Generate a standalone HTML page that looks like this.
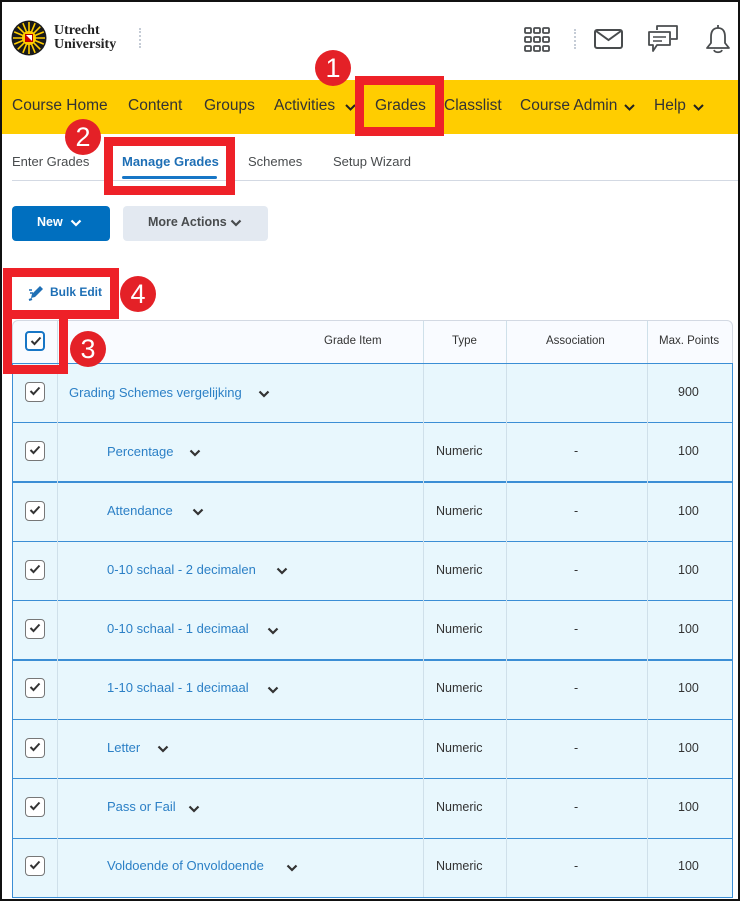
<!DOCTYPE html>
<html><head><meta charset="utf-8">
<style>
*{box-sizing:border-box;margin:0;padding:0;white-space:nowrap}
body{width:740px;height:901px;background:#fff;font-family:"Liberation Sans",sans-serif;position:relative;overflow:hidden}
.frame{position:absolute;left:0;top:0;width:740px;height:901px;border:2px solid #111;z-index:50;pointer-events:none}
.abs{position:absolute}
.nav{position:absolute;top:80px;left:0;width:740px;height:54px;background:#ffcd00}
.nav span{position:absolute;top:17px;font-size:15.5px;color:#333}
.tab{position:absolute;top:154px;font-size:13px;color:#494c4e}
.red{position:absolute;border:9px solid #ee2128;z-index:20}
.circ{position:absolute;width:36px;height:36px;border-radius:50%;background:#e42127;color:#fff;font-size:27px;text-align:center;line-height:36px;z-index:21}
.row{position:absolute;left:12px;width:721px;background:#e8f7fd;border:1px solid #3b8ed5;border-top:none}
.cb{position:absolute;width:20px;height:20px;border:1px solid #777;border-radius:4px;background:#fff}
.cb svg{position:absolute;left:3px;top:3px}
.cell{position:absolute;font-size:12.5px;color:#333}
.link{position:absolute;font-size:13px;color:#2c80c6}
.vl{position:absolute;width:1px;background:#cfe0ea}
.chev{position:absolute}
</style></head><body>
<div class="frame"></div>

<svg class="abs" style="left:11px;top:20px" width="36" height="36" viewBox="0 0 36 36">
<circle cx="18" cy="18" r="17.5" fill="#1a1a1a"/>
<g stroke="#ffcd00" stroke-width="1.6">
<line x1="18" y1="2" x2="18" y2="34"/><line x1="2" y1="18" x2="34" y2="18"/>
<line x1="6.7" y1="6.7" x2="29.3" y2="29.3"/><line x1="29.3" y1="6.7" x2="6.7" y2="29.3"/>
<line x1="11.9" y1="3.2" x2="24.1" y2="32.8"/><line x1="24.1" y1="3.2" x2="11.9" y2="32.8"/>
<line x1="3.2" y1="11.9" x2="32.8" y2="24.1"/><line x1="3.2" y1="24.1" x2="32.8" y2="11.9"/>
</g>
<circle cx="18" cy="18" r="7" fill="#ffcd00"/>
<rect x="14.5" y="14.5" width="7" height="7" fill="#fff" stroke="#a00" stroke-width="1"/>
<path d="M14.5 14.5 L21.5 21.5 L14.5 21.5Z" fill="#c00"/>
</svg>
<div class="abs" style="left:54px;top:24px;font-family:'Liberation Serif',serif;font-weight:bold;font-size:14px;line-height:14px;color:#222">Utrecht<br>University</div>
<div class="abs" style="left:139px;top:28px;height:20px;border-left:2px dotted #c5ccd6"></div>

<svg class="abs" style="left:524px;top:27px" width="26" height="25" viewBox="0 0 26 25" fill="none" stroke="#494c4e" stroke-width="1.8">
<rect x="1" y="1" width="6" height="5" rx="1"/><rect x="10" y="1" width="6" height="5" rx="1"/><rect x="19" y="1" width="6" height="5" rx="1"/>
<rect x="1" y="10" width="6" height="5" rx="1"/><rect x="10" y="10" width="6" height="5" rx="1"/><rect x="19" y="10" width="6" height="5" rx="1"/>
<rect x="1" y="19" width="6" height="5" rx="1"/><rect x="10" y="19" width="6" height="5" rx="1"/><rect x="19" y="19" width="6" height="5" rx="1"/>
</svg>
<div class="abs" style="left:574px;top:29px;height:20px;border-left:2px dotted #c5ccd6"></div>
<svg class="abs" style="left:594px;top:29px" width="29" height="20" viewBox="0 0 29 20" fill="none" stroke="#494c4e" stroke-width="2">
<rect x="1" y="1" width="27" height="18" rx="2"/><path d="M2 2 L14.5 11 L27 2"/>
</svg>
<svg class="abs" style="left:647px;top:24px" width="32" height="30" viewBox="0 0 32 30" fill="none" stroke="#494c4e" stroke-width="1.8" stroke-linejoin="round">
<path d="M10 6 V2 H30 V15 H24"/>
<path d="M2 8 H23 V21 H10 L6 27 V21 H2 Z"/>
<path d="M6 13 H19 M6 17 H15" stroke-width="1.4"/>
</svg>
<svg class="abs" style="left:704px;top:24px" width="28" height="30" viewBox="0 0 28 30" fill="none" stroke="#494c4e" stroke-width="1.8" stroke-linejoin="round">
<path d="M14 1 V4"/><path d="M14 4 C8 4 7 9 7 13 V19 L3 24 H25 L21 19 V13 C21 9 20 4 14 4Z"/>
<path d="M10 26 C11 29 17 29 18 26"/>
</svg>

<div class="nav">
<span style="left:12px">Course Home</span>
<span style="left:128px">Content</span>
<span style="left:204px">Groups</span>
<span style="left:274px">Activities</span>
<span style="left:375px">Grades</span>
<span style="left:444px">Classlist</span>
<span style="left:520px">Course Admin</span>
<span style="left:654px">Help</span>
</div>
<svg class="chev" style="left:345px;top:104px" width="11" height="7" viewBox="0 0 11 7"><path d="M1 1 L5.5 5.5 L10 1" fill="none" stroke="#222" stroke-width="2"/></svg>
<svg class="chev" style="left:624px;top:104px" width="11" height="7" viewBox="0 0 11 7"><path d="M1 1 L5.5 5.5 L10 1" fill="none" stroke="#222" stroke-width="2"/></svg>
<svg class="chev" style="left:693px;top:104px" width="11" height="7" viewBox="0 0 11 7"><path d="M1 1 L5.5 5.5 L10 1" fill="none" stroke="#222" stroke-width="2"/></svg>

<div class="tab" style="left:12px">Enter Grades</div>
<div class="tab" style="left:122px;color:#1e6fb5;font-weight:bold">Manage Grades</div>
<div class="abs" style="left:122px;top:176px;width:95px;height:3px;background:#1776c6;border-radius:2px"></div>
<div class="tab" style="left:248px">Schemes</div>
<div class="tab" style="left:333px">Setup Wizard</div>
<div class="abs" style="left:12px;top:180px;width:726px;height:1px;background:#d3d9e3"></div>

<div class="abs" style="left:12px;top:206px;width:98px;height:35px;background:#006fbf;border-radius:4px"></div>
<div class="abs" style="left:37px;top:215px;font-size:12.5px;font-weight:bold;color:#fff">New</div>
<svg class="chev" style="left:70px;top:219px" width="12" height="8" viewBox="0 0 12 8"><path d="M1.5 1.5 L6 6 L10.5 1.5" fill="none" stroke="#fff" stroke-width="2.2"/></svg>
<div class="abs" style="left:123px;top:206px;width:145px;height:35px;background:#e3e9f1;border-radius:4px"></div>
<div class="abs" style="left:148px;top:215px;font-size:12.5px;font-weight:bold;color:#494c4e">More Actions</div>
<svg class="chev" style="left:230px;top:219px" width="12" height="8" viewBox="0 0 12 8"><path d="M1.5 1.5 L6 6 L10.5 1.5" fill="none" stroke="#494c4e" stroke-width="2.2"/></svg>

<svg class="abs" style="left:28px;top:284px;z-index:22" width="18" height="17" viewBox="0 0 18 17"><path d="M3 14 L4 10 L12 2 L15 5 L7 13 Z" fill="#1e6fb5"/><path d="M1 16 L4 15" stroke="#1e6fb5" stroke-width="2"/><path d="M1 6 L4 6 M2 9 L5 9" stroke="#1e6fb5" stroke-width="1.5"/></svg>
<div class="abs" style="left:50px;top:285px;font-size:12px;font-weight:bold;color:#1e6fb5;z-index:22">Bulk Edit</div>

<div class="abs" style="left:12px;top:320px;width:721px;height:44px;background:#f9fbff;border:1px solid #d3d9e3;border-radius:6px 6px 0 0"></div>
<div class="vl" style="left:57px;top:321px;height:576px"></div>
<div class="vl" style="left:423px;top:321px;height:576px"></div>
<div class="vl" style="left:506px;top:321px;height:576px"></div>
<div class="vl" style="left:647px;top:321px;height:576px"></div>
<div class="cell" style="left:324px;top:335px;font-size:11.5px">Grade Item</div>
<div class="cell" style="left:452px;top:335px;font-size:11.5px">Type</div>
<div class="cell" style="left:546px;top:335px;font-size:11.5px">Association</div>
<div class="cell" style="left:659px;top:335px;font-size:11.5px">Max. Points</div>
<div class="cb" style="left:25px;top:331px;border:2px solid #1776c6;z-index:22"><svg width="12" height="10" viewBox="0 0 12 10"><path d="M1.5 5 L4.5 8 L10.5 1.5" fill="none" stroke="#333" stroke-width="2"/></svg></div>

<div class="row" style="top:363px;height:60px;border-top:1px solid #3b8ed5"></div>
<div class="row" style="top:422px;height:60px;border-top:1px solid #3b8ed5"></div>
<div class="row" style="top:482px;height:60px;border-top:1px solid #3b8ed5"></div>
<div class="row" style="top:541px;height:60px;border-top:1px solid #3b8ed5"></div>
<div class="row" style="top:600px;height:60px;border-top:1px solid #3b8ed5"></div>
<div class="row" style="top:660px;height:60px;border-top:1px solid #3b8ed5"></div>
<div class="row" style="top:719px;height:60px;border-top:1px solid #3b8ed5"></div>
<div class="row" style="top:778px;height:61px;border-top:1px solid #3b8ed5"></div>
<div class="row" style="top:838px;height:60px;border-top:1px solid #3b8ed5"></div>
<div class="vl" style="left:57px;top:364px;height:533px;z-index:3"></div>
<div class="vl" style="left:423px;top:364px;height:533px;z-index:3"></div>
<div class="vl" style="left:506px;top:364px;height:533px;z-index:3"></div>
<div class="vl" style="left:647px;top:364px;height:533px;z-index:3"></div>

<div style="position:absolute;left:0;top:0;width:740px;height:901px;z-index:4">
<div class="cb" style="left:25px;top:382px"><svg width="12" height="10" viewBox="0 0 12 10"><path d="M1.5 5 L4.5 8 L10.5 1.5" fill="none" stroke="#333" stroke-width="2"/></svg></div>
<div class="link" style="left:69px;top:385px">Grading Schemes vergelijking</div>
<svg class="chev" style="left:258px;top:390px" width="12" height="8" viewBox="0 0 12 8"><path d="M1.5 1.5 L6 6 L10.5 1.5" fill="none" stroke="#333" stroke-width="2.2"/></svg>
<div class="cell" style="left:678px;top:385px">900</div>

<div class="cb" style="left:25px;top:441px"><svg width="12" height="10" viewBox="0 0 12 10"><path d="M1.5 5 L4.5 8 L10.5 1.5" fill="none" stroke="#333" stroke-width="2"/></svg></div>
<div class="link" style="left:107px;top:444px">Percentage</div>
<svg class="chev" style="left:189px;top:449px" width="12" height="8" viewBox="0 0 12 8"><path d="M1.5 1.5 L6 6 L10.5 1.5" fill="none" stroke="#333" stroke-width="2.2"/></svg>
<div class="cell" style="left:436px;top:444px">Numeric</div><div class="cell" style="left:574px;top:444px">-</div><div class="cell" style="left:678px;top:444px">100</div>

<div class="cb" style="left:25px;top:501px"><svg width="12" height="10" viewBox="0 0 12 10"><path d="M1.5 5 L4.5 8 L10.5 1.5" fill="none" stroke="#333" stroke-width="2"/></svg></div>
<div class="link" style="left:107px;top:503px">Attendance</div>
<svg class="chev" style="left:192px;top:508px" width="12" height="8" viewBox="0 0 12 8"><path d="M1.5 1.5 L6 6 L10.5 1.5" fill="none" stroke="#333" stroke-width="2.2"/></svg>
<div class="cell" style="left:436px;top:504px">Numeric</div><div class="cell" style="left:574px;top:504px">-</div><div class="cell" style="left:678px;top:504px">100</div>

<div class="cb" style="left:25px;top:560px"><svg width="12" height="10" viewBox="0 0 12 10"><path d="M1.5 5 L4.5 8 L10.5 1.5" fill="none" stroke="#333" stroke-width="2"/></svg></div>
<div class="link" style="left:107px;top:562px">0-10 schaal - 2 decimalen</div>
<svg class="chev" style="left:276px;top:567px" width="12" height="8" viewBox="0 0 12 8"><path d="M1.5 1.5 L6 6 L10.5 1.5" fill="none" stroke="#333" stroke-width="2.2"/></svg>
<div class="cell" style="left:436px;top:563px">Numeric</div><div class="cell" style="left:574px;top:563px">-</div><div class="cell" style="left:678px;top:563px">100</div>

<div class="cb" style="left:25px;top:619px"><svg width="12" height="10" viewBox="0 0 12 10"><path d="M1.5 5 L4.5 8 L10.5 1.5" fill="none" stroke="#333" stroke-width="2"/></svg></div>
<div class="link" style="left:107px;top:621px">0-10 schaal - 1 decimaal</div>
<svg class="chev" style="left:267px;top:627px" width="12" height="8" viewBox="0 0 12 8"><path d="M1.5 1.5 L6 6 L10.5 1.5" fill="none" stroke="#333" stroke-width="2.2"/></svg>
<div class="cell" style="left:436px;top:622px">Numeric</div><div class="cell" style="left:574px;top:622px">-</div><div class="cell" style="left:678px;top:622px">100</div>

<div class="cb" style="left:25px;top:678px"><svg width="12" height="10" viewBox="0 0 12 10"><path d="M1.5 5 L4.5 8 L10.5 1.5" fill="none" stroke="#333" stroke-width="2"/></svg></div>
<div class="link" style="left:107px;top:680px">1-10 schaal - 1 decimaal</div>
<svg class="chev" style="left:267px;top:686px" width="12" height="8" viewBox="0 0 12 8"><path d="M1.5 1.5 L6 6 L10.5 1.5" fill="none" stroke="#333" stroke-width="2.2"/></svg>
<div class="cell" style="left:436px;top:681px">Numeric</div><div class="cell" style="left:574px;top:681px">-</div><div class="cell" style="left:678px;top:681px">100</div>

<div class="cb" style="left:25px;top:738px"><svg width="12" height="10" viewBox="0 0 12 10"><path d="M1.5 5 L4.5 8 L10.5 1.5" fill="none" stroke="#333" stroke-width="2"/></svg></div>
<div class="link" style="left:107px;top:740px">Letter</div>
<svg class="chev" style="left:157px;top:745px" width="12" height="8" viewBox="0 0 12 8"><path d="M1.5 1.5 L6 6 L10.5 1.5" fill="none" stroke="#333" stroke-width="2.2"/></svg>
<div class="cell" style="left:436px;top:741px">Numeric</div><div class="cell" style="left:574px;top:741px">-</div><div class="cell" style="left:678px;top:741px">100</div>

<div class="cb" style="left:25px;top:797px"><svg width="12" height="10" viewBox="0 0 12 10"><path d="M1.5 5 L4.5 8 L10.5 1.5" fill="none" stroke="#333" stroke-width="2"/></svg></div>
<div class="link" style="left:107px;top:799px">Pass or Fail</div>
<svg class="chev" style="left:188px;top:805px" width="12" height="8" viewBox="0 0 12 8"><path d="M1.5 1.5 L6 6 L10.5 1.5" fill="none" stroke="#333" stroke-width="2.2"/></svg>
<div class="cell" style="left:436px;top:800px">Numeric</div><div class="cell" style="left:574px;top:800px">-</div><div class="cell" style="left:678px;top:800px">100</div>

<div class="cb" style="left:25px;top:856px"><svg width="12" height="10" viewBox="0 0 12 10"><path d="M1.5 5 L4.5 8 L10.5 1.5" fill="none" stroke="#333" stroke-width="2"/></svg></div>
<div class="link" style="left:107px;top:858px">Voldoende of Onvoldoende</div>
<svg class="chev" style="left:286px;top:864px" width="12" height="8" viewBox="0 0 12 8"><path d="M1.5 1.5 L6 6 L10.5 1.5" fill="none" stroke="#333" stroke-width="2.2"/></svg>
<div class="cell" style="left:436px;top:859px">Numeric</div><div class="cell" style="left:574px;top:859px">-</div><div class="cell" style="left:678px;top:859px">100</div>
</div>

<div class="red" style="left:355px;top:76px;width:89px;height:60px"></div>
<div class="red" style="left:104px;top:137px;width:131px;height:58px"></div>
<div class="red" style="left:3px;top:268px;width:116px;height:51px;border-bottom-width:9px"></div>
<div class="red" style="left:3px;top:310px;width:65px;height:64px;border-top:none"></div>
<div class="abs" style="left:12px;top:278px;width:98px;height:31px;background:#fff;z-index:21"></div>

<div class="circ" style="left:315px;top:50px">1</div>
<div class="circ" style="left:65px;top:119px">2</div>
<div class="circ" style="left:70px;top:331px">3</div>
<div class="circ" style="left:120px;top:276px">4</div>
</body></html>
